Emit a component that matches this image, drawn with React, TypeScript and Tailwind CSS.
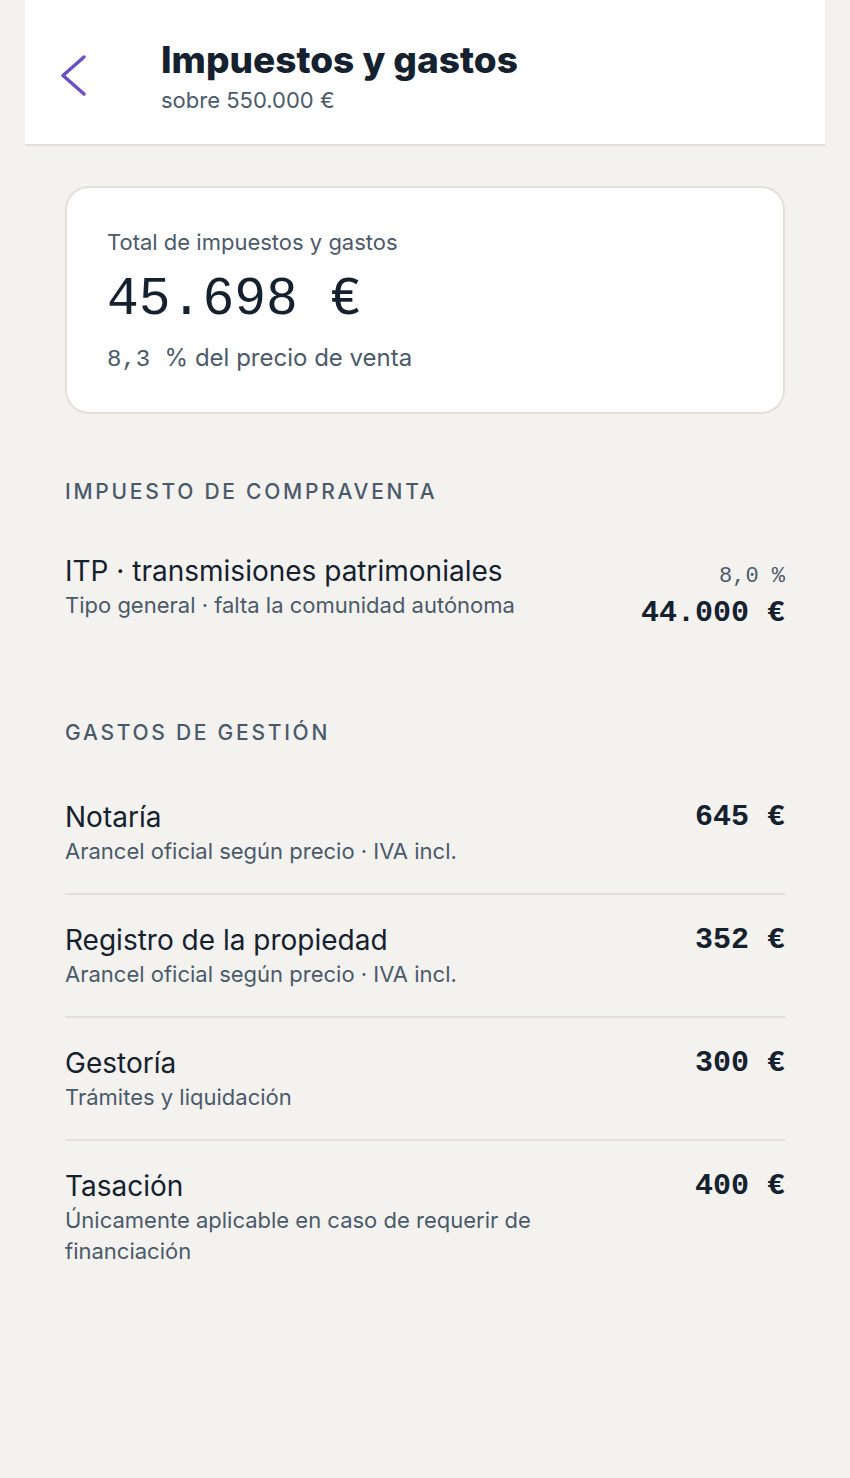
import { ReactNode } from "react";

type Line = {
  title: string;
  note: string;
  amount: string;
  rate?: string;
};

const purchaseTax: Line[] = [
  {
    title: "ITP · transmisiones patrimoniales",
    note: "Tipo general · falta la comunidad autónoma",
    amount: "44.000 €",
    rate: "8,0 %",
  },
];

const fees: Line[] = [
  { title: "Notaría", note: "Arancel oficial según precio · IVA incl.", amount: "645 €" },
  { title: "Registro de la propiedad", note: "Arancel oficial según precio · IVA incl.", amount: "352 €" },
  { title: "Gestoría", note: "Trámites y liquidación", amount: "300 €" },
  {
    title: "Tasación",
    note: "Únicamente aplicable en caso de requerir de financiación",
    amount: "400 €",
  },
];

function BackChevron() {
  return (
    <svg width="40" height="44" viewBox="0 0 40 44" fill="none">
      <path
        d="M29 3 L8 21.5 L29 40"
        stroke="#6a4fc6"
        strokeWidth="3.5"
        strokeLinecap="round"
        strokeLinejoin="round"
      />
    </svg>
  );
}

function Section({
  label,
  className,
  headClass,
  children,
}: {
  label: string;
  className: string;
  headClass: string;
  children: ReactNode;
}) {
  return (
    <section className={className}>
      <h2
        className={`text-[21px] leading-[28px] font-medium uppercase tracking-[0.13em] text-[#4b5a6b] ${headClass}`}
      >
        {label}
      </h2>
      <div>{children}</div>
    </section>
  );
}

function Row({ item, last }: { item: Line; last: boolean }) {
  return (
    <div
      className={`flex items-start justify-between gap-6 pt-[27px] pb-[26px] ${
        last ? "" : "border-b-2 border-[#e2e0d8]"
      }`}
    >
      <div className="max-w-[500px]">
        <div className="text-[28px] leading-[37px] text-[#15212f]">{item.title}</div>
        <div className="text-[22px] leading-[31px] text-[#4b5a6b]">{item.note}</div>
      </div>
      <div className={`flex flex-col items-end shrink-0 ${item.rate ? "mt-[9px]" : ""}`}>
        {item.rate && (
          <div className="font-mono text-[22px] leading-[30px] text-[#4b5a6b]">{item.rate}</div>
        )}
        <div
          className={`font-mono font-bold text-[30px] leading-[36px] text-[#15212f] whitespace-pre ${
            item.rate ? "mt-[3px]" : ""
          }`}
        >
          {item.amount}
        </div>
      </div>
    </div>
  );
}

export default function App() {
  return (
    <div
      className="min-h-screen bg-[#f3f2ee]"
      style={{ fontFamily: "Inter, 'Noto Sans', sans-serif" }}
    >
      <div className="w-[800px] mx-auto">
        {/* Header */}
        <header className="bg-white border-b-2 border-[#e2e0d8] h-[146px] flex items-center pl-[30px]">
          <button type="button" className="w-[60px] flex items-center mt-2">
            <BackChevron />
          </button>
          <div className="ml-[46px] mt-[9px]">
            <h1 className="text-[37px] leading-[44px] font-extrabold text-[#15212f]">
              Impuestos y gastos
            </h1>
            <p className="text-[22px] leading-[30px] text-[#4b5a6b] mt-[3px]">sobre 550.000 €</p>
          </div>
        </header>

        <main className="px-10 pt-10 pb-20">
          {/* Total card */}
          <div className="bg-white border-2 border-[#e2e0d8] rounded-[24px] px-10 pt-10 pb-[38px]">
            <p className="text-[22px] leading-[28px] text-[#4b5a6b]">Total de impuestos y gastos</p>
            <p className="mt-[14px] font-mono text-[53px] leading-[60px] text-[#15212f]">45.698 €</p>
            <p className="mt-[14px] text-[24px] leading-[28px] text-[#4b5a6b]">
              <span className="font-mono">8,3 </span>% del precio de venta
            </p>
          </div>

          <Section label="Impuesto de compraventa" className="mt-16" headClass="mb-5">
            {purchaseTax.map((item, i) => (
              <Row key={item.title} item={item} last={i === purchaseTax.length - 1} />
            ))}
          </Section>

          <Section label="Gastos de gestión" className="mt-[62px]" headClass="mb-[25px]">
            {fees.map((item, i) => (
              <Row key={item.title} item={item} last={i === fees.length - 1} />
            ))}
          </Section>
        </main>
      </div>
    </div>
  );
}
